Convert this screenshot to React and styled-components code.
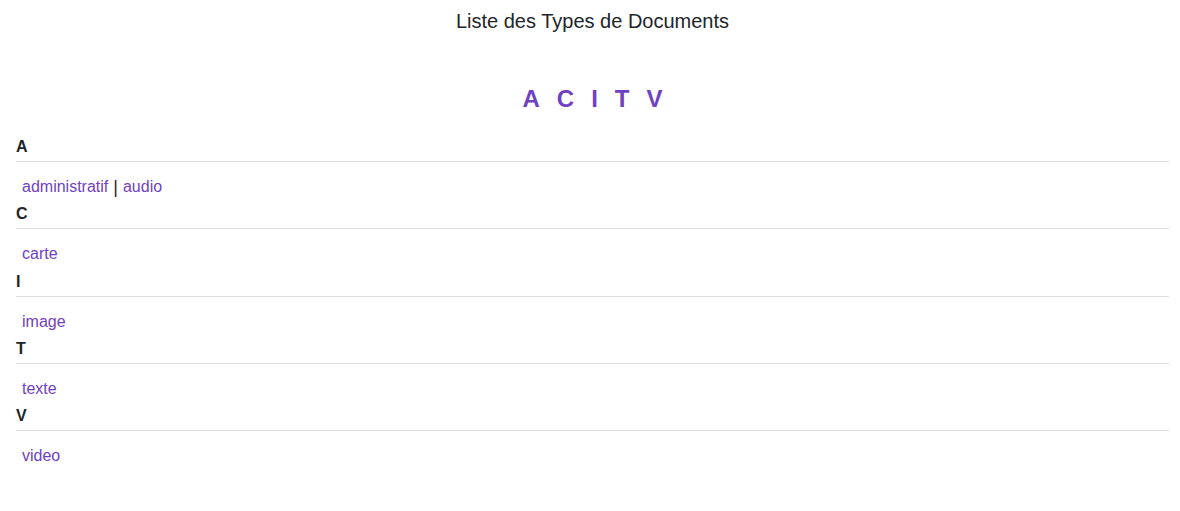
import React from 'react';
import styled, { createGlobalStyle } from 'styled-components';

const GlobalStyle = createGlobalStyle`
  body {
    margin: 0;
    background: #ffffff;
    font-family: 'Liberation Sans', Arial, sans-serif;
    color: #212529;
  }
`;

const Page = styled.div`
  padding: 0 11px 0 16px;
`;

const Title = styled.h1`
  margin: 0;
  padding-top: 9px;
  font-size: 20px;
  font-weight: normal;
  line-height: 24px;
  text-align: center;
  color: #212529;
`;

const LetterNav = styled.nav`
  display: flex;
  justify-content: center;
  gap: 17px;
  margin-top: 52px;
`;

const LetterLink = styled.a`
  font-size: 24px;
  font-weight: bold;
  line-height: 28px;
  color: #6f42c1;
  text-decoration: none;
`;

const SectionList = styled.div`
  margin-top: 25px;
`;

const Section = styled.section`
  display: flex;
  flex-direction: column;
`;

const Heading = styled.h2`
  margin: 0;
  padding-bottom: 5px;
  font-size: 16px;
  font-weight: bold;
  line-height: 18px;
  color: #212529;
  border-bottom: 1px solid #dcdcdc;
`;

const Entries = styled.div`
  display: flex;
  align-items: center;
  padding: 16px 0 9.25px 6px;
  font-size: 16px;
  line-height: 18px;
`;

const Entry = styled.a`
  color: #6f42c1;
  text-decoration: none;
`;

const Separator = styled.span`
  margin: 0 5px;
  color: #212529;
  font-size: 18px;
`;

const groups = [
  { letter: 'A', items: ['administratif', 'audio'] },
  { letter: 'C', items: ['carte'] },
  { letter: 'I', items: ['image'] },
  { letter: 'T', items: ['texte'] },
  { letter: 'V', items: ['video'] },
];

const App = () => {
  return (
    <Page>
      <GlobalStyle />
      <Title>Liste des Types de Documents</Title>
      <LetterNav>
        {groups.map((g) => (
          <LetterLink key={g.letter} href={`#${g.letter}`}>{g.letter}</LetterLink>
        ))}
      </LetterNav>
      <SectionList>
        {groups.map((g) => (
          <Section key={g.letter} id={g.letter}>
            <Heading>{g.letter}</Heading>
            <Entries>
              {g.items.map((item, i) => (
                <React.Fragment key={item}>
                  {i > 0 && <Separator>|</Separator>}
                  <Entry href="#">{item}</Entry>
                </React.Fragment>
              ))}
            </Entries>
          </Section>
        ))}
      </SectionList>
    </Page>
  );
};

export default App;
